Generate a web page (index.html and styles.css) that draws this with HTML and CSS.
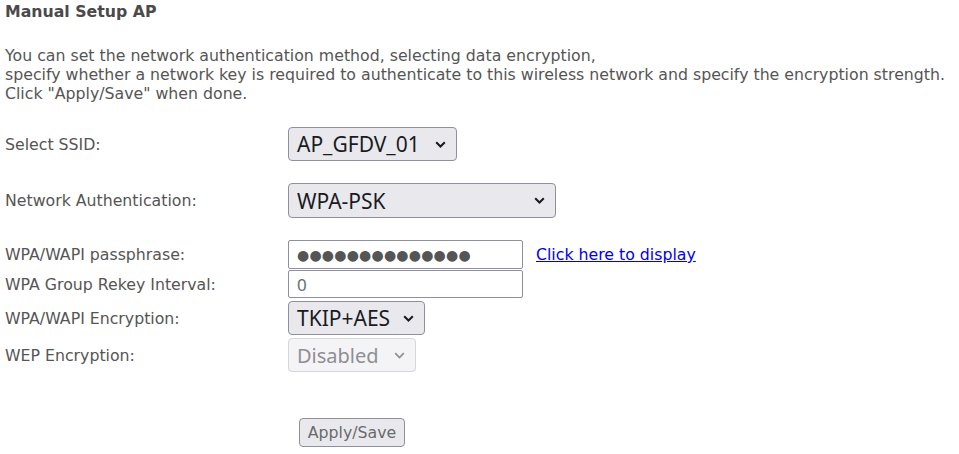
FILE: index.html
```html
<!DOCTYPE html>
<html>
<head>
<meta charset="utf-8">
<link rel="stylesheet" href="styles.css">
</head>
<body>
<div class="page">
  <div class="title">Manual Setup AP</div>
  <p class="desc">You can set the network authentication method, selecting data encryption,<br>specify whether a network key is required to authenticate to this wireless network and specify the encryption strength.<br>Click "Apply/Save" when done.</p>
  <form class="form">
    <div class="row">
      <label class="label">Select SSID:</label>
      <div class="sel sel-ssid"><span>AP_GFDV_01</span><svg class="chev" viewBox="0 0 11 7" width="11" height="7"><path d="M1.2 1.2l4.3 4.3 4.3-4.3" fill="none" stroke="currentColor" stroke-width="2"/></svg></div>
    </div>
    <div class="row spaced">
      <label class="label">Network Authentication:</label>
      <div class="sel sel-auth"><span>WPA-PSK</span><svg class="chev" viewBox="0 0 11 7" width="11" height="7"><path d="M1.2 1.2l4.3 4.3 4.3-4.3" fill="none" stroke="currentColor" stroke-width="2"/></svg></div>
    </div>
    <div class="row spaced">
      <label class="label">WPA/WAPI passphrase:</label>
      <div class="inp dots">●●●●●●●●●●●●●●</div>
      <a class="link" href="#">Click here to display</a>
    </div>
    <div class="row tight1">
      <label class="label">WPA Group Rekey Interval:</label>
      <div class="inp num">0</div>
    </div>
    <div class="row tight2">
      <label class="label">WPA/WAPI Encryption:</label>
      <div class="sel sel-enc"><span>TKIP+AES</span><svg class="chev" viewBox="0 0 11 7" width="11" height="7"><path d="M1.2 1.2l4.3 4.3 4.3-4.3" fill="none" stroke="currentColor" stroke-width="2"/></svg></div>
    </div>
    <div class="row tight2">
      <label class="label">WEP Encryption:</label>
      <div class="sel sel-wep disabled"><span>Disabled</span><svg class="chev" viewBox="0 0 11 7" width="11" height="7"><path d="M1.2 1.2l4.3 4.3 4.3-4.3" fill="none" stroke="currentColor" stroke-width="1.7"/></svg></div>
    </div>
    <div class="actions">
      <button type="button" class="btn">Apply/Save</button>
    </div>
  </form>
</div>
</body>
</html>
```

FILE: styles.css
```css
html, body {
  margin: 0;
  padding: 0;
  background: #ffffff;
}
body {
  font-family: "DejaVu Sans", sans-serif;
  font-size: 15.75px;
  color: #555555;
}
.page {
  padding: 3px 5px 0 5px;
}
.title {
  font-weight: bold;
  font-size: 15.75px;
  line-height: 18px;
  color: #4a4a4a;
}
.desc {
  margin: 25px 0 0 0;
  line-height: 19px;
  white-space: nowrap;
}
.form {
  margin-top: 24px;
}
.row {
  display: flex;
  align-items: center;
}
.row.spaced { margin-top: 22px; }
.row.tight1 { margin-top: 1px; }
.row.tight2 { margin-top: 3px; }
.label {
  width: 283px;
  flex: none;
}
.sel {
  box-sizing: border-box;
  height: 34px;
  display: flex;
  align-items: center;
  justify-content: space-between;
  padding: 0 10px 0 8px;
  background: #e9e9ed;
  border: 1px solid #8f8f9d;
  border-radius: 4px;
  font-family: "Noto Sans", sans-serif;
  font-size: 21px;
  color: #1b1b1f;
}
.sel-ssid { width: 169px; }
.sel-auth { width: 268px; height: 35px; }
.sel-enc { width: 137px; }
.sel-wep { width: 128px; font-size: 20px; }
.sel.disabled {
  background: #f4f4f6;
  border-color: #d5d5da;
  color: #8e8e94;
}
.chev {
  color: #1b1b1f;
  flex: none;
}
.disabled .chev { color: #8e8e94; }
.inp {
  box-sizing: border-box;
  width: 235px;
  height: 29px;
  border: 1px solid #8f8f9d;
  border-radius: 2px;
  padding: 0 8px;
  display: flex;
  align-items: center;
  background: #fff;
}
.dots {
  font-family: "DejaVu Sans", sans-serif;
  font-size: 14px;
  letter-spacing: 0.2px;
  color: #555555;
}
.num {
  font-family: "Noto Sans", sans-serif;
  font-size: 17px;
  color: #5f6b7a;
  height: 28px;
}
.link {
  margin-left: 13px;
  color: #0000ee;
  text-decoration: underline;
}
.actions {
  margin-top: 46px;
  padding-left: 294px;
}
.btn {
  box-sizing: border-box;
  height: 29px;
  width: 106px;
  padding: 0;
  background: #e9e9ed;
  border: 1px solid #8f8f9d;
  border-radius: 4px;
  font-family: "DejaVu Sans", sans-serif;
  font-size: 15.75px;
  color: #6a6a6a;
}
```
